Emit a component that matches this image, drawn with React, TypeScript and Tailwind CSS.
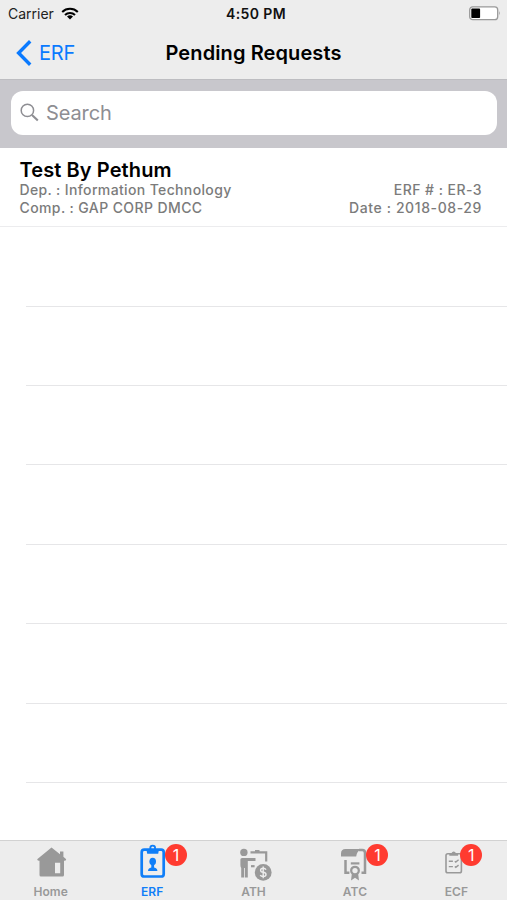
import type { ReactNode } from "react";

const emptyRows = Array.from({ length: 7 });

const tabs = [
  { label: "Home", icon: <HomeIcon /> },
  { label: "ERF", icon: <PersonBoardIcon />, active: true, badge: "left-[43px]" },
  { label: "ATH", icon: <HireIcon /> },
  { label: "ATC", icon: <CertificateIcon />, badge: "left-[41.5px]" },
  { label: "ECF", icon: <ChecklistIcon />, badge: "left-[34px]" },
];

function TabSvg({ children }: { children: ReactNode }) {
  return (
    <svg width="60" height="42" viewBox="0 0 60 42" fill="none" stroke="currentColor">
      {children}
    </svg>
  );
}

function HomeIcon() {
  return (
    <TabSvg>
      <path
        d="M30.5 6.5 L39 13.2 V10.5 H42.4 V15.8 L45.2 18.3 Q45 20 43 19.8 V34 Q43 35.5 41.5 35.5 H20 Q18.5 35.5 18.5 34 V19.8 Q16.5 20 16.2 18.3 Z M34 21.8 V32.3 H39.2 V21.8 Z"
        fill="currentColor"
        fillRule="evenodd"
        stroke="none"
      />
    </TabSvg>
  );
}

function PersonBoardIcon() {
  return (
    <TabSvg>
      <rect x="19.7" y="8.7" width="22" height="26.8" rx="2.6" strokeWidth="2.7" />
      <circle cx="30.7" cy="7" r="2.4" strokeWidth="1.8" />
      <path d="M25.6 8.2 H28.6 L29.6 9.4 H31.8 L32.8 8.2 H35.8 Q36.8 8.2 36.8 9.4 L36.2 12.8 H25.2 L24.6 9.4 Q24.6 8.2 25.6 8.2 Z" fill="currentColor" stroke="none" />
      <ellipse cx="30.7" cy="20.6" rx="3.3" ry="3.8" fill="currentColor" stroke="none" />
      <path d="M29.3 23 H32.1 V26.6 Q35.4 27.2 35.4 30 H26 Q26 27.2 29.3 26.6 Z" fill="currentColor" stroke="none" />
    </TabSvg>
  );
}

function HireIcon() {
  return (
    <TabSvg>
      <circle cx="19.9" cy="11.4" r="3.7" fill="currentColor" stroke="none" />
      <path
        d="M18 17 H31.5 V19.9 H23.8 V36.6 H20.9 V27 H20.1 V36.6 H17.2 V27 Q16.4 26 16.4 24 V18.6 Q16.4 17 18 17 Z"
        fill="currentColor"
        stroke="none"
      />
      <path d="M26.5 11.3 H42.2 V20.6 M31 10 H35.5" strokeWidth="2.2" />
      <path d="M27 25.2 H30.6" strokeWidth="2.2" />
      <circle cx="39.2" cy="31.4" r="8.4" fill="currentColor" stroke="none" />
      <path
        d="M42 28.7 Q41.3 27.2 39.2 27.2 Q36.6 27.2 36.6 29.2 Q36.6 31 39.2 31.3 Q42 31.7 42 33.6 Q42 35.6 39.2 35.6 Q36.9 35.6 36.3 34 M39.2 25.6 V37.2"
        stroke="#ededed"
        strokeWidth="1.4"
      />
    </TabSvg>
  );
}

function CertificateIcon() {
  return (
    <TabSvg>
      <path d="M20.5 8 H36 Q31.6 10.5 31.2 15.6 H16 V12.5 Q16 8 20.5 8 Z" fill="currentColor" stroke="none" />
      <path d="M34 9.1 H37.4 Q40 9.1 40 12 V31.8 H36.5 M20.5 19 V31.8 H24.4" strokeWidth="2.5" />
      <path d="M25.8 22.4 H34.4" strokeWidth="2.2" />
      <circle cx="30" cy="29.6" r="3.8" strokeWidth="2.3" />
      <path d="M26.8 33 H33.2 L34 39.6 L30 36.8 L26 39.6 Z" fill="currentColor" stroke="none" />
    </TabSvg>
  );
}

function ChecklistIcon() {
  return (
    <TabSvg>
      <rect x="20" y="12.7" width="15.4" height="19" rx="1.8" strokeWidth="1.6" />
      <path d="M23.3 12 H25.6 A2.2 2.2 0 0 1 29.8 12 H32.1 V14.8 H23.3 Z" fill="currentColor" stroke="none" />
      <path d="M22.8 20.3 H26.9 M28.8 20.2 L29.8 21 L32.6 18.8 M22.8 25.6 H26.9 M28.8 25.5 L29.8 26.3 L32.6 24.1" strokeWidth="1.4" />
    </TabSvg>
  );
}

export default function App() {
  return (
    <div className="flex h-[900px] w-[507px] flex-col overflow-hidden bg-white font-['Inter','Liberation_Sans',sans-serif] text-black">
      {/* Status bar */}
      <div className="grid h-[27px] shrink-0 grid-cols-[1fr_auto_1fr] items-center bg-[#ededed] px-[6px] text-[14px]">
        <div className="flex items-center gap-[7px] pl-[2px] text-[#222]">
          <span>Carrier</span>
          <svg width="18" height="13" viewBox="0 0 18 13" fill="none" stroke="#000" strokeWidth="2.1">
            <path d="M1.2 4.9 A11.4 11.4 0 0 1 16.8 4.9" />
            <path d="M4 8 A7.3 7.3 0 0 1 14 8" />
            <path d="M9 12.6 L6 9.6 A4.3 4.3 0 0 1 12 9.6 Z" fill="#000" stroke="none" />
          </svg>
        </div>
        <span className="pl-[5px] font-semibold tracking-[0.4px] text-[#111]">4:50 PM</span>
        <svg className="justify-self-end" width="32" height="15" viewBox="0 0 32 15">
          <rect x="0.7" y="0.9" width="28" height="12.8" rx="3" fill="#fff" stroke="#999" strokeWidth="1.3" />
          <rect x="2.3" y="2.6" width="8.8" height="9.4" rx="0.8" fill="#000" />
          <path d="M30 5 Q31.8 7.3 30 9.6 Z" fill="#999" />
        </svg>
      </div>

      {/* Navigation bar */}
      <div className="grid h-[52px] shrink-0 grid-cols-[1fr_auto_1fr] items-center bg-[#ededed] px-4 pb-px">
        <div className="flex items-center gap-[7px] text-[20px] text-[#0a7aff]">
          <svg width="16" height="26" viewBox="0 0 16 26" fill="none" stroke="currentColor" strokeWidth="3.4">
            <path d="M14.2 1.2 L2.6 13 L14.2 24.8" />
          </svg>
          <span className="tracking-[-0.2px]">ERF</span>
        </div>
        <h1 className="whitespace-nowrap text-center text-[20px] font-semibold tracking-[0.1px]">Pending Requests</h1>
      </div>

      {/* Search */}
      <div className="h-[69px] shrink-0 border-t border-[#bdbdc1] bg-[#c8c7cc] pl-[11px] pr-[10px] pt-[11px]">
        <div className="flex h-[44px] items-center gap-[7px] rounded-xl bg-white pb-px pl-[9px] text-[#8e8e93]">
          <svg width="19" height="19" viewBox="0 0 19 19" fill="none" stroke="currentColor">
            <circle cx="7.4" cy="7.4" r="6.2" strokeWidth="1.5" />
            <path d="M12 12 L17.8 17.6" strokeWidth="2.1" />
          </svg>
          <span className="text-[20px] tracking-[-0.1px]">Search</span>
        </div>
      </div>

      {/* Requests */}
      <div className="flex-1 overflow-hidden">
        <div className="flex h-[79.3px] flex-col border-b border-[#ececee] pl-[19.5px] pr-[25px] pt-[10px]">
          <h2 className="text-[20px] font-semibold leading-[24px] tracking-[0.1px]">Test By Pethum</h2>
          <div className="-mt-px flex justify-between text-[14px] font-medium leading-[18px] tracking-[0.36px] text-[#7b7b7b]">
            <span>Dep. : Information Technology</span>
            <span className="tracking-[0.45px]">ERF # : ER-3</span>
          </div>
          <div className="flex justify-between text-[14px] font-medium leading-[18px] tracking-[0.4px] text-[#7b7b7b]">
            <span>Comp. : GAP CORP DMCC</span>
            <span className="tracking-[0.6px]">Date : 2018-08-29</span>
          </div>
        </div>
        {emptyRows.map((_, index) => (
          <div key={index} className="ml-[26px] h-[79.4px] border-b border-[#e6e6e8]" />
        ))}
      </div>

      {/* Tab bar */}
      <div className="flex h-[60px] shrink-0 border-t border-[#d2d2d2] bg-[#ededed]">
        {tabs.map((tab) => (
          <div
            key={tab.label}
            className={`flex flex-1 flex-col items-center ${tab.active ? "text-[#0f7ef8]" : "text-[#999]"}`}
          >
            <div className="relative">
              {tab.icon}
              {tab.badge && (
                <span
                  className={`absolute top-[3px] flex h-[22px] w-[22px] items-center justify-center rounded-full bg-[#ff3b30] text-[16px] leading-[22px] text-white ${tab.badge}`}
                >
                  1
                </span>
              )}
            </div>
            <span className="pt-px text-[12px] font-semibold leading-[16px] tracking-[0.05px]">{tab.label}</span>
          </div>
        ))}
      </div>
    </div>
  );
}
